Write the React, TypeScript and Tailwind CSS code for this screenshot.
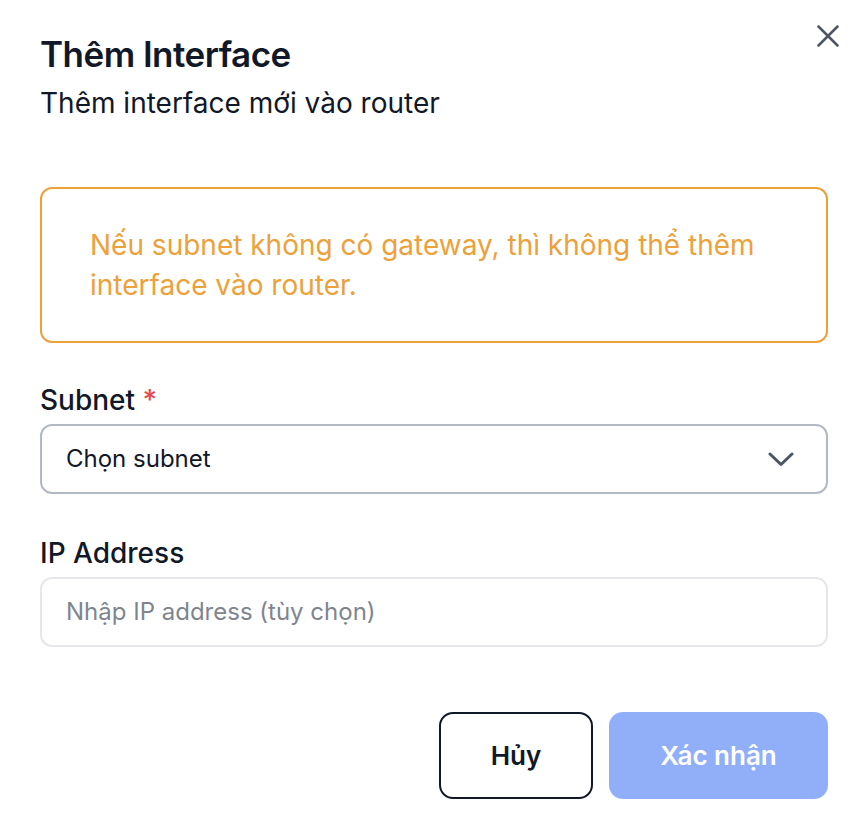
import React from "react";

export default function App() {
  return (
    <div
      className="relative w-[868px] h-[832px] bg-white px-[40px] flex flex-col text-[#111827]"
      style={{ fontFamily: "Inter, 'Noto Sans', sans-serif" }}
    >
      <button className="absolute right-[21px] top-[17px] text-[#4b5563]" aria-label="Close">
        <svg width="38" height="38" viewBox="0 0 24 24" fill="none" stroke="currentColor" strokeWidth="1.6" strokeLinecap="round" strokeLinejoin="round">
          <path d="M18 6 6 18" />
          <path d="m6 6 12 12" />
        </svg>
      </button>

      <h2 className="pt-[34px] text-[35px] leading-[40px] font-semibold tracking-[-0.015em]">Thêm Interface</h2>
      <p className="mt-[9px] text-[28px] leading-[40px]">Thêm interface mới vào router</p>

      <div className="mt-[64px] border-2 border-[#eca13a] rounded-[12px] px-[48px] py-[36px] text-[28px] leading-[40px] text-[#eca13a]">
        Nếu subnet không có gateway, thì không thể thêm interface vào router.
      </div>

      <label className="mt-[37px] text-[28px] leading-[40px] font-medium">
        Subnet <span className="text-[#e5484d]">*</span>
      </label>
      <div className="mt-[4px] h-[70px] border-2 border-[#b3b9c3] rounded-[12px] pl-[24px] pr-[32px] flex items-center justify-between">
        <span className="text-[24px] leading-[32px]">Chọn subnet</span>
        <svg width="26" height="15" viewBox="0 0 26 15" fill="none" stroke="#4b5563" strokeWidth="3" strokeLinecap="round" strokeLinejoin="round">
          <polyline points="2,2 13,12.5 24,2" />
        </svg>
      </div>

      <label className="mt-[39px] text-[28px] leading-[40px] font-medium">IP Address</label>
      <div className="mt-[4px] h-[70px] border-2 border-[#e5e7eb] rounded-[12px] pl-[24px] flex items-center">
        <span className="text-[24px] leading-[32px] text-[#7f858f]">Nhập IP address (tùy chọn)</span>
      </div>

      <div className="mt-[65px] flex justify-end gap-[16px]">
        <button className="h-[87px] w-[154px] border-2 border-[#111827] rounded-[14px] text-[26px] font-semibold text-[#111827] flex items-center justify-center">
          Hủy
        </button>
        <button className="h-[87px] w-[219px] bg-[#91aff9] rounded-[14px] text-[26px] font-semibold text-white flex items-center justify-center">
          Xác nhận
        </button>
      </div>
    </div>
  );
}
